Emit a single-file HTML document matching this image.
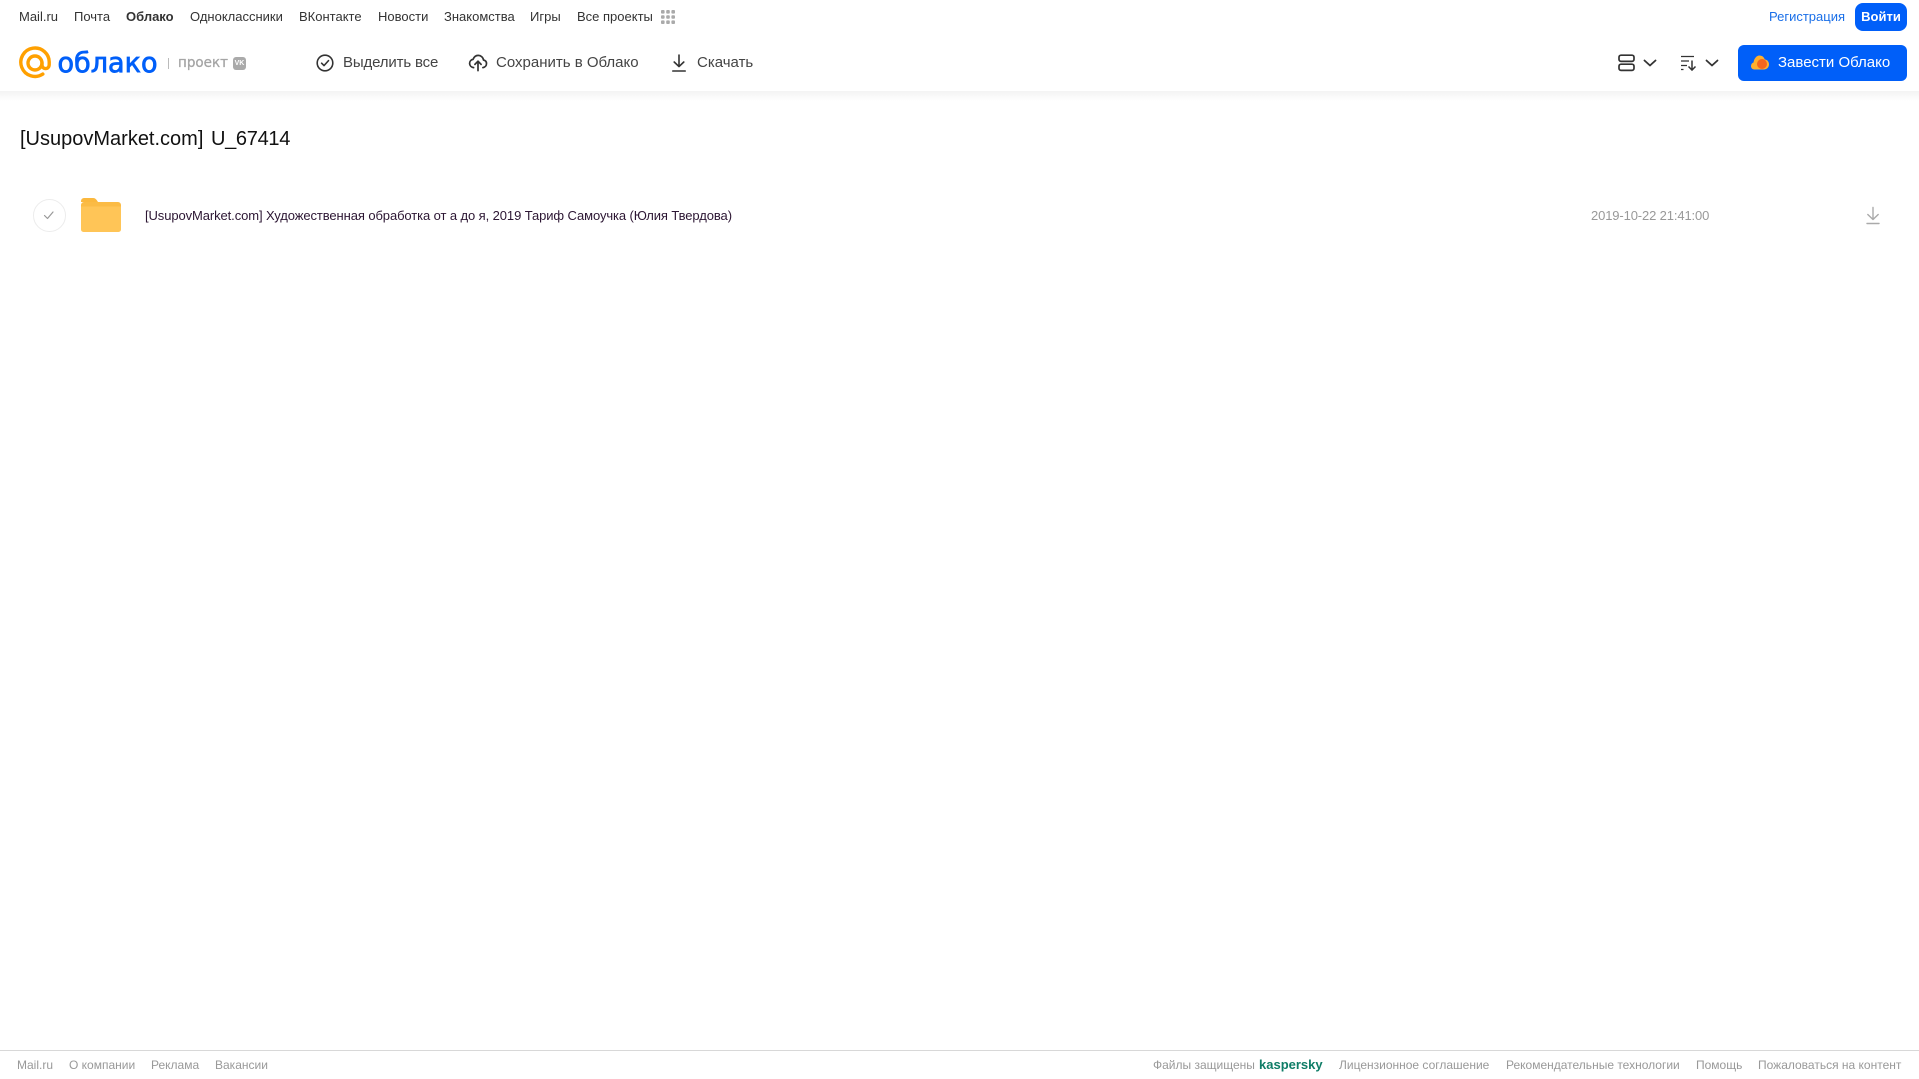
<!DOCTYPE html>
<html lang="ru"><head><meta charset="utf-8"><title>Облако</title>
<style>
html,body{margin:0;padding:0;background:#fff;}
body{width:1919px;height:1079px;position:relative;overflow:hidden;font-family:"Liberation Sans",Arial,sans-serif;color:#333;}
.t{position:absolute;white-space:nowrap;line-height:16px;}
.n{font-size:13px;top:9px;color:#333;}
.b{font-size:15px;top:55px;color:#444;line-height:16px;}
.f{font-size:12px;top:1057px;color:#999;}
svg{position:absolute;display:block;}
</style></head><body>
<div class="t n" style="left:19px">Mail.ru</div>
<div class="t n" style="left:74px">Почта</div>
<div class="t n" style="left:126px;font-weight:bold">Облако</div>
<div class="t n" style="left:190px">Одноклассники</div>
<div class="t n" style="left:299px">ВКонтакте</div>
<div class="t n" style="left:378px">Новости</div>
<div class="t n" style="left:444px">Знакомства</div>
<div class="t n" style="left:530px">Игры</div>
<div class="t n" style="left:577px">Все проекты</div>
<svg style="left:660px;top:9px" width="16" height="16" fill="#aaa"><rect x="1" y="1" width="3.6" height="3.6" rx="1"/><rect x="6.2" y="1" width="3.6" height="3.6" rx="1"/><rect x="11.4" y="1" width="3.6" height="3.6" rx="1"/><rect x="1" y="6.2" width="3.6" height="3.6" rx="1"/><rect x="6.2" y="6.2" width="3.6" height="3.6" rx="1"/><rect x="11.4" y="6.2" width="3.6" height="3.6" rx="1"/><rect x="1" y="11.4" width="3.6" height="3.6" rx="1"/><rect x="6.2" y="11.4" width="3.6" height="3.6" rx="1"/><rect x="11.4" y="11.4" width="3.6" height="3.6" rx="1"/></svg>
<div class="t n" style="left:1769px;color:#1a6fe8">Регистрация</div>
<div style="position:absolute;left:1855px;top:3px;width:52px;height:28px;border-radius:8px;background:#005ff9;color:#fff;font-size:13px;font-weight:bold;line-height:28px;text-align:center">Войти</div>

<svg style="left:18px;top:46px" width="34" height="34" fill="none"><path d="M24.800 28.100A14.200 14.200 0 1 1 31.200 17v1.500c0 2.500-1.600 4.100-3.600 4.100s-3.600-1.600-3.600-4.100V17" stroke="#ffa000" stroke-width="3.400" stroke-linecap="round"/><circle cx="17" cy="17" r="7" stroke="#ffa000" stroke-width="3.400"/></svg>
<svg style="left:55px;top:40px" width="112" height="46"><text x="2.500" y="32" font-family="'DejaVu Sans',sans-serif" font-size="28" fill="#005ff9" stroke="#005ff9" stroke-width=".8" textLength="100" lengthAdjust="spacingAndGlyphs">облако</text></svg>
<div style="position:absolute;left:168px;top:58px;width:1px;height:11px;background:#bbb"></div>
<svg style="left:177px;top:52px" width="54" height="20"><text x="1" y="15" font-family="'DejaVu Sans',sans-serif" font-size="14" fill="#a5a5a5" stroke="#a5a5a5" stroke-width=".3" textLength="50" lengthAdjust="spacingAndGlyphs">проект</text></svg>
<div style="position:absolute;left:233px;top:57px;width:13px;height:13px;border-radius:3px;background:#aaa;color:#fff;font-size:7px;font-weight:bold;line-height:13px;text-align:center">VK</div>

<svg style="left:315px;top:53px" width="20" height="20" fill="none" stroke="#333" stroke-width="1.6"><circle cx="10" cy="10" r="7.800"/><path d="M6.600 10.200l2.400 2.400 4.500-5" stroke-linecap="round" stroke-linejoin="round"/></svg>
<div class="t b" style="left:343px;letter-spacing:-.15px">Выделить все</div>
<svg style="left:468px;top:52px" width="20" height="20" fill="none" stroke="#333" stroke-width="1.700" stroke-linecap="round" stroke-linejoin="round"><path d="M5.600 15.600C3.200 15.300 1.600 13.600 1.600 11.400c0-2 1.400-3.700 3.400-4C6 5 8 3.400 10.200 3.400c2.700 0 5 2 5.300 4.600 1.800.4 3 1.800 3 3.500 0 2.100-1.400 3.800-3.600 4.100"/><path d="M10 18.600V9.400M6.900 12.400 10 9.200l3.100 3.200"/></svg>
<div class="t b" style="left:496px">Сохранить в Облако</div>
<svg style="left:669px;top:53px" width="20" height="20" fill="none" stroke="#333" stroke-width="1.600" stroke-linecap="round" stroke-linejoin="round"><path d="M10 2v11.500M5.200 9 10 13.600 14.800 9M3.800 18h12.400"/></svg>
<div class="t b" style="left:697px">Скачать</div>

<svg style="left:1618px;top:54px" width="18" height="18" fill="none" stroke="#333" stroke-width="1.700"><rect x="1" y="1.200" width="15" height="6.200" rx="2"/><rect x="1" y="10.200" width="15" height="6.200" rx="2"/></svg>
<svg style="left:1643px;top:58px" width="14" height="10" fill="none" stroke="#333" stroke-width="1.800" stroke-linecap="round" stroke-linejoin="round"><path d="M1.500 2.500 7 7.500l5.500-5"/></svg>
<svg style="left:1680px;top:54px" width="18" height="18" fill="none" stroke="#333" stroke-width="1.300"><path d="M1 2.500h13M1 7h8M1 11.500h6M1 15.500h2.500"/><path d="M12 6.500v9.500M8.500 12.500l3.500 3.600 3.500-3.600" stroke-width="1.500"/></svg>
<svg style="left:1705px;top:58px" width="14" height="10" fill="none" stroke="#333" stroke-width="1.800" stroke-linecap="round" stroke-linejoin="round"><path d="M1.500 2.500 7 7.500l5.500-5"/></svg>
<div style="position:absolute;left:1738px;top:45px;width:169px;height:36px;border-radius:6px;background:#005ff9"></div>
<svg style="left:1750px;top:53px" width="20" height="20"><path d="M4.500 16.500C2.300 16.500 1 14.900 1 13c0-1.700 1-3 2.500-3.500C4 6 6.200 2.500 9.500 2.500c2.700 0 4.600 1.800 5.300 4 2.500.2 4.200 2.200 4.200 4.800 0 3-2.200 5.200-5 5.200z" fill="#ffb02e"/><circle cx="12" cy="11" r="5" fill="#f4661e"/></svg>
<div class="t b" style="left:1778px;color:#fff">Завести Облако</div>

<div style="position:absolute;left:0;top:91px;width:1919px;height:10px;background:linear-gradient(#f3f3f3,#fff)"></div>

<div class="t" style="left:20px;top:127px;font-size:20px;line-height:24px;color:#111">[UsupovMarket.com] <span style="margin-left:2px;letter-spacing:-.3px">U_67414</span></div>

<div style="position:absolute;left:33px;top:199px;width:31px;height:31px;border:1px solid #ececec;border-radius:50%"></div>
<svg style="left:42px;top:208px" width="14" height="14" fill="none" stroke="#999" stroke-width="1.200" stroke-linecap="round" stroke-linejoin="round"><path d="M2.500 7.500 5.500 10.500 11 4"/></svg>
<svg style="left:81px;top:198px" width="40" height="34"><path d="M0 3a3 3 0 0 1 3-3h9c2 0 3 1 4 2.500L17 4H0z" fill="#fbb83e"/><path d="M0 7a3 3 0 0 1 3-3h34a3 3 0 0 1 3 3v4H0z" fill="#fbbb45"/><path d="M0 8.500h40V31.500a2.500 2.500 0 0 1-2.500 2.500H2.500A2.500 2.500 0 0 1 0 31.500z" fill="#ffc557"/></svg>
<div class="t" style="left:145px;top:208px;font-size:13px;color:#2c1633;letter-spacing:-.095px">[UsupovMarket.com] Художественная обработка от а до я, 2019 Тариф Самоучка (Юлия Твердова)</div>
<div class="t" style="left:1591px;top:208px;font-size:13px;color:#999;letter-spacing:-.13px">2019-10-22 21:41:00</div>
<svg style="left:1865px;top:206px" width="16" height="20" fill="none" stroke="#aaa" stroke-width="1.400" stroke-linecap="round" stroke-linejoin="round"><path d="M8 1.500v12M2.800 8.500 8 13.500l5.200-5M2 17.500h12" /></svg>

<div style="position:absolute;left:0;top:1050px;width:1919px;height:1px;background:#d8d8d8"></div>
<div class="t f" style="left:17px">Mail.ru</div>
<div class="t f" style="left:69px">О компании</div>
<div class="t f" style="left:151px">Реклама</div>
<div class="t f" style="left:215px">Вакансии</div>
<div class="t f" style="left:1153px">Файлы защищены</div>
<div class="t f" style="left:1259px;color:#0f7d67;font-weight:bold;font-size:13px">kaspersky</div>
<div class="t f" style="left:1339px">Лицензионное соглашение</div>
<div class="t f" style="left:1506px">Рекомендательные технологии</div>
<div class="t f" style="left:1696px">Помощь</div>
<div class="t f" style="left:1758px">Пожаловаться на контент</div>
</body></html>
